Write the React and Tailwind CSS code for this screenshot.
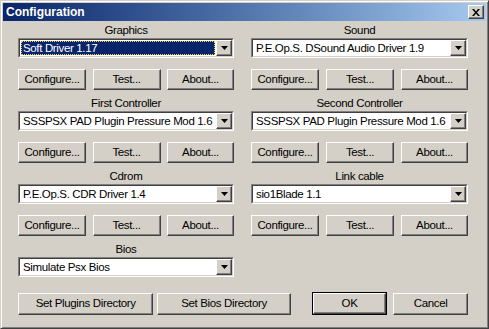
import React from 'react';

const raised = 'bg-[#d4d0c8] border border-t-white border-l-white border-r-[#404040] border-b-[#404040] shadow-[inset_-1px_-1px_#808080]';
const ui = "font-['Liberation_Sans',Arial,sans-serif] text-[11.5px] tracking-[-0.35px]";

const Btn = ({ label, className = '' }) => (
    <button className={`${raised} ${ui} h-[21px] text-black leading-none whitespace-nowrap flex items-center justify-center ${className}`}>
        {label}
    </button>
);

const Select = ({ value, selected }) => (
    <div className="h-[20px] flex border border-t-[#808080] border-l-[#808080] border-r-white border-b-white">
        <div className="flex-1 min-w-0 flex border border-t-[#404040] border-l-[#404040] border-r-[#d4d0c8] border-b-[#d4d0c8] bg-white">
            <div className="flex-1 min-w-0 p-[1px] overflow-hidden">
                <div
                    className={
                        selected
                            ? `${ui} h-full bg-[#0a246a] text-white outline outline-1 outline-dotted outline-[#f5d33a] -outline-offset-1 pl-[2px] leading-[14px] whitespace-nowrap`
                            : `${ui} h-full text-black pl-[2px] leading-[14px] whitespace-nowrap`
                    }
                >
                    {value}
                </div>
            </div>
            <div className={`${raised} w-[16px] shrink-0 flex items-center justify-center`}>
                <svg width="7" height="4" viewBox="0 0 7 4">
                    <path d="M0 0h7L3.5 4z" fill="#000" />
                </svg>
            </div>
        </div>
    </div>
);

const Group = ({ title, value, selected, buttons = true }) => (
    <div className="flex flex-col">
        <div className={`${ui} h-[14px] text-center leading-[14px] text-black`}>{title}</div>
        <div className="mt-[1px]">
            <Select value={value} selected={selected} />
        </div>
        {buttons ? (
            <div className="mt-[11px] mb-[6px] flex justify-between">
                <Btn label="Configure..." className="w-[68px]" />
                <Btn label="Test..." className="w-[68px]" />
                <Btn label="About..." className="w-[67px]" />
            </div>
        ) : (
            <div className="h-[38px]" />
        )}
    </div>
);

export default function App() {
    return (
        <div className="w-[489px] h-[329px] bg-[#d4d0c8] border border-t-[#d4d0c8] border-l-[#d4d0c8] border-r-[#404040] border-b-[#404040] shadow-[inset_1px_1px_white,inset_-1px_-1px_#808080] p-[2px] flex flex-col overflow-hidden">
            <div className="h-[18px] bg-gradient-to-r from-[#0a246a] to-[#a6caf0] flex items-center justify-between pl-[3px] pr-[2px]">
                <span className="font-['Liberation_Sans',Arial,sans-serif] text-white font-bold text-[12px] leading-none">Configuration</span>
                <div className={`${raised} w-[16px] h-[14px] flex items-center justify-center`}>
                    <svg width="8" height="7" viewBox="0 0 8 7">
                        <path d="M0 0h2l2 2.5L6 0h2L5 3.5 8 7H6L4 4.5 2 7H0l3-3.5z" fill="#000" />
                    </svg>
                </div>
            </div>

            <div className="pl-[15px] pr-[18px] pt-[2px] grid grid-cols-[216px_217px] gap-x-[17px]">
                <div className="flex flex-col min-w-0">
                    <Group title="Graphics" value="Soft Driver 1.17" selected />
                    <Group title="First Controller" value="SSSPSX PAD Plugin Pressure Mod 1.6" />
                    <Group title="Cdrom" value="P.E.Op.S. CDR Driver 1.4" />
                    <Group title="Bios" value="Simulate Psx Bios" buttons={false} />
                </div>
                <div className="flex flex-col min-w-0">
                    <Group title="Sound" value="P.E.Op.S. DSound Audio Driver 1.9" />
                    <Group title="Second Controller" value="SSSPSX PAD Plugin Pressure Mod 1.6" />
                    <Group title="Link cable" value="sio1Blade 1.1" />
                </div>
            </div>

            <div className="pl-[15px] pr-[18px] mt-[-23px] flex items-center">
                <Btn label="Set Plugins Directory" className="w-[136px] h-[22px]" />
                <Btn label="Set Bios Directory" className="w-[134px] h-[22px] ml-[4px]" />
                <div className="ml-[21px] w-[76px] h-[23px] border border-black flex">
                    <Btn label="OK" className="flex-1 h-full" />
                </div>
                <Btn label="Cancel" className="w-[75px] h-[22px] ml-[6px]" />
            </div>
        </div>
    );
}
